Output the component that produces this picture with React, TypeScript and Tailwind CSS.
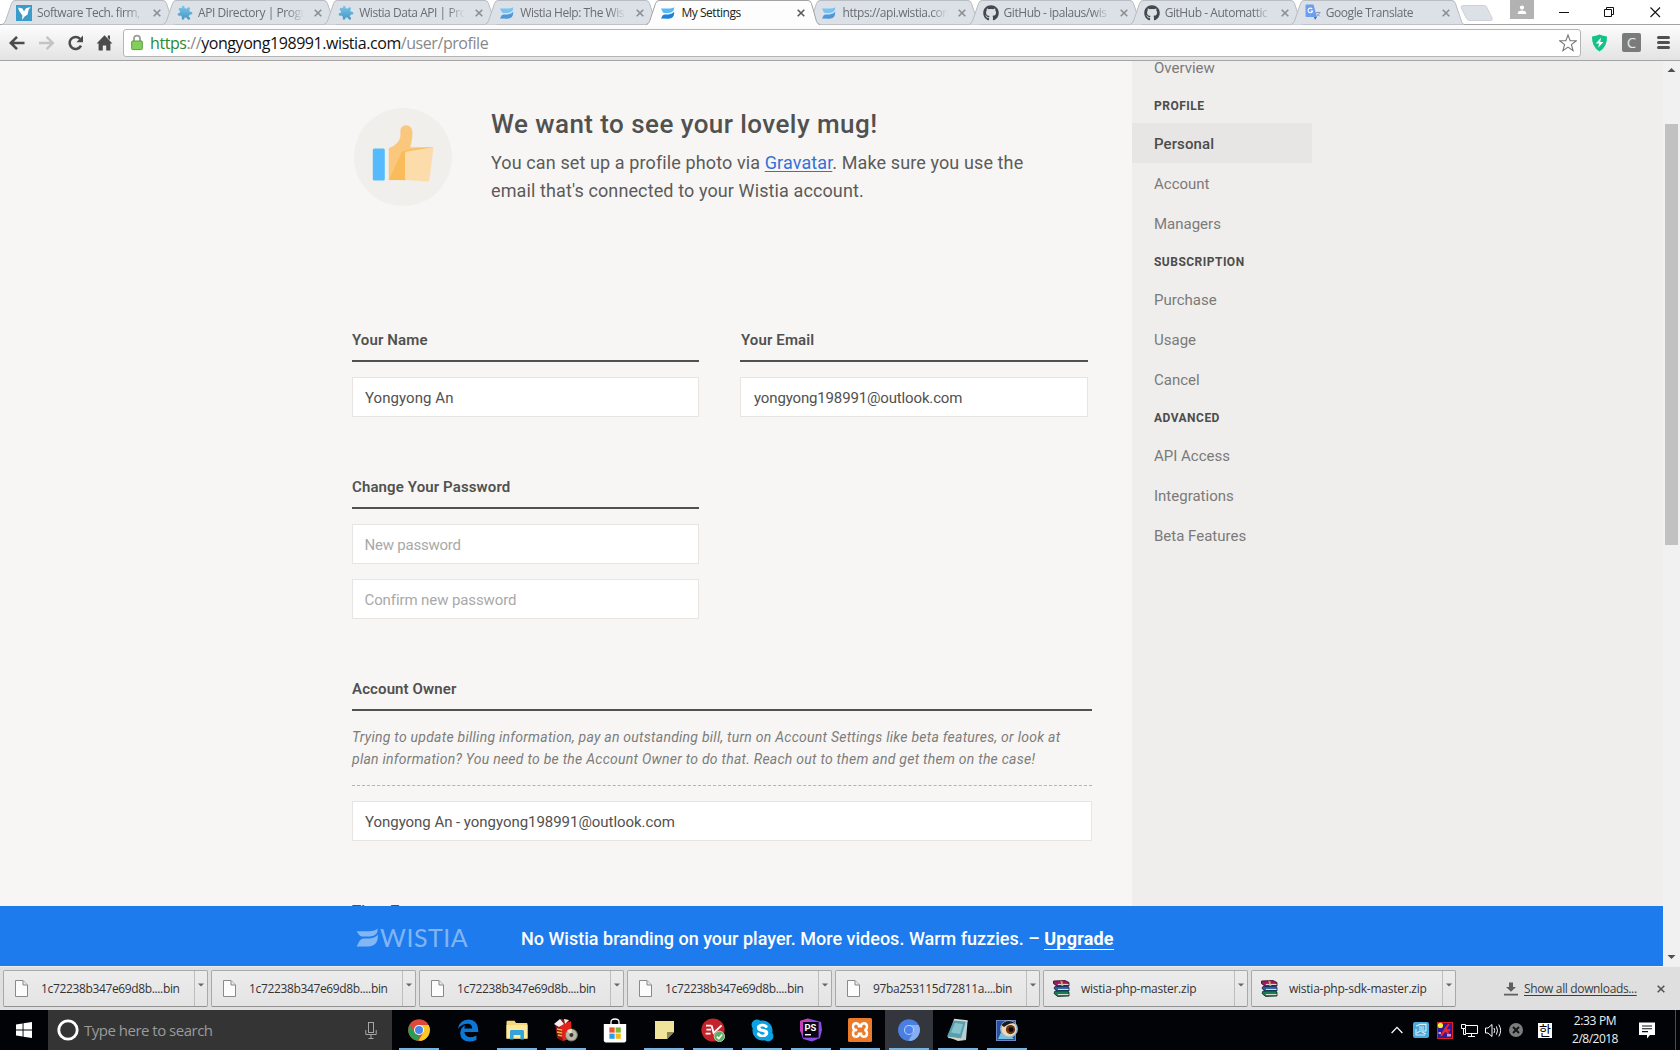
import React from "react";
import { FaGithub, FaSkype } from "react-icons/fa";

/* ---------- favicons ---------- */

const BirdIcon = () => (
  <svg width="16" height="16" viewBox="0 0 16 16">
    <rect width="16" height="16" fill="#3a9ccb" />
    <path d="M2 2.5 L6.5 3.6 L8 6.5 L10 3.2 L14.5 2 L12.6 5 L11.6 9.4 L8.6 11.4 L6 15 L6.4 10.6 L3.2 6 Z" fill="#fff" />
  </svg>
);

const PuzzleIcon = () => (
  <svg width="16" height="16" viewBox="0 0 16 16">
    <defs>
      <linearGradient id="pz" x1="0" y1="0" x2="0" y2="1">
        <stop offset="0" stopColor="#7cc6e6" />
        <stop offset="1" stopColor="#4596c8" />
      </linearGradient>
    </defs>
    <path
      d="M5 3 Q4.6 0.6 6.4 0.8 Q8 1 7.6 3.2 L10 3.6 Q10.8 1.6 12.6 2.4 Q13.8 3.4 12.2 5 L13 6.8 Q15.6 6.4 15.4 8.4 Q15 9.8 13 9.4 L11.6 11.2 Q14 13 12.6 14.4 Q11 15.4 9.8 12.8 L7.6 12.6 Q7.4 15 5.6 14.8 Q4.2 14.2 5 12 L3.4 10.4 Q1 11.4 0.6 9.6 Q0.6 8 2.8 7.8 L3 6 Q0.8 4.8 1.8 3.4 Q3 2.2 5 3 Z"
      fill="url(#pz)"
    />
  </svg>
);

const WistiaIcon = ({ faded = true }: { faded?: boolean }) => (
  <svg width="16" height="16" viewBox="0 0 16 16" opacity={faded ? 0.75 : 1}>
    <path d="M1 3.4 L10 3.4 Q13 3 14.2 2.2 Q14.4 7.6 8.4 7.9 L4 7.9 Q3 7.8 2.4 6.6 Z" fill="#59b8f7" />
    <path d="M1 13.6 L2.6 10.6 Q3.4 9.4 5 9.4 L8.4 9.4 Q12.6 9.2 14.2 6.8 Q14.6 13.6 8.4 13.8 Z" fill="#1e80d8" />
  </svg>
);

const TranslateIcon = () => (
  <svg width="17" height="17" viewBox="0 0 17 17">
    <path d="M7 5 H15 Q16 5 16 6 V15 Q16 16 15 16 H10 Z" fill="#dfe3ea" />
    <path d="M11 8.5 H15.6 M13.3 7.6 V8.5 M14.8 8.5 Q14 11 11.6 12.4 M12 9.6 L14.8 12.4" stroke="#8b97a8" strokeWidth="0.9" fill="none" />
    <path d="M1.5 0.5 H8.5 L12 13 H1.5 Q0.5 13 0.5 12 V1.5 Q0.5 0.5 1.5 0.5 Z" fill="#6b9df2" />
    <path d="M9 13 H12 L10 16 Z" fill="#3f68c4" />
    <path d="M7.2 5 A2.3 2.3 0 1 0 7.6 7 H5.6" stroke="#fff" strokeWidth="1.1" fill="none" />
  </svg>
);

const GithubIcon = () => <FaGithub size={16} color="#44474b" />;

const tabs = [
  { title: "Software Tech. firm,", Icon: BirdIcon },
  { title: "API Directory | Progr", Icon: PuzzleIcon },
  { title: "Wistia Data API | Pro", Icon: PuzzleIcon },
  { title: "Wistia Help: The Wis", Icon: WistiaIcon },
  { title: "My Settings", Icon: WistiaIcon, active: true },
  { title: "https://api.wistia.com", Icon: WistiaIcon },
  { title: "GitHub - ipalaus/wis", Icon: GithubIcon },
  { title: "GitHub - Automattic", Icon: GithubIcon },
  { title: "Google Translate", Icon: TranslateIcon },
];

const CloseX = ({ color, size = 8 }: { color: string; size?: number }) => (
  <svg width={size} height={size} viewBox="0 0 8 8" className="shrink-0">
    <path d="M0.7 0.7 L7.3 7.3 M7.3 0.7 L0.7 7.3" stroke={color} strokeWidth="1.6" />
  </svg>
);

function Tab({ title, Icon, active }: { title: string; Icon: React.FC<any>; active?: boolean }) {
  return (
    <div className={`relative w-[161.1px] h-[25px] shrink-0 ${active ? "z-10" : "z-0"}`}>
      <svg className="absolute left-0 top-0" width="174" height="26" viewBox="0 0 174 26">
        <path
          d={
            active
              ? "M0 25.5 Q2.5 24.5 3.5 21.5 L9.5 3.5 Q10.5 0.5 13 0.5 H162 Q164.5 0.5 165.5 3.5 L170.5 21.5 Q171.5 24.5 174 25.5 V26 H0 Z"
              : "M0 24.5 Q2.5 23.5 3.5 21 L9.5 3.5 Q10.5 0.5 13 0.5 H161 Q163.5 0.5 164.5 3.5 L170.5 21.5 Q171.3 24 173 24.5 Z"
          }
          fill={active ? "#fdfdfd" : "#dce1e7"}
        />
        <path
          d={
            active
              ? "M0 24.5 Q2.5 24 3.5 21.5 L9.5 3.5 Q10.5 0.5 13 0.5 H162 Q164.5 0.5 165.5 3.5 L170.5 21.5 Q171.5 24 174 24.5"
              : "M0 24.5 Q2.5 23.5 3.5 21 L9.5 3.5 Q10.5 0.5 13 0.5 H161 Q163.5 0.5 164.5 3.5 L170.5 21.5 Q171.3 24 173 24.5"
          }
          fill="none"
          stroke={active ? "#a3a3a3" : "#b9bcc0"}
        />
      </svg>
      <div className="relative flex h-[25px] items-center pl-[14px]">
        <div className="flex w-[18px] shrink-0 items-center">
          <Icon faded={!active} />
        </div>
        <div
          className={`ml-[3px] w-[106px] overflow-hidden whitespace-nowrap pt-px text-[12px] tracking-[-0.45px] ${
            active ? "text-[#222]" : "text-[#6a6d71] [mask-image:linear-gradient(to_right,#000_84%,transparent)]"
          }`}
        >
          {title}
        </div>
        <div className="ml-[10px] flex items-center">
          <CloseX color={active ? "#5a5a5a" : "#8b8e92"} />
        </div>
      </div>
    </div>
  );
}

function TabStrip() {
  return (
    <div className="relative flex h-[25px] border-b border-[#a3a3a3] bg-white pl-[2px]">
      {tabs.map((t) => (
        <Tab key={t.title} {...t} />
      ))}
      <svg className="ml-[8px] mt-[5px] shrink-0" width="34" height="16" viewBox="0 0 34 16">
        <path d="M3 0.5 H24 Q26 0.5 27 2.5 L32 13 Q33 15.5 30.5 15.5 H10 Q7.5 15.5 6.5 13.5 L1.2 2.8 Q0.5 0.5 3 0.5 Z" fill="#dce1e7" stroke="#cfd3d8" />
      </svg>
      <div className="ml-[16px] flex h-[19px] w-6 shrink-0 items-center justify-center bg-[#b2b2b2]">
        <svg width="10" height="10" viewBox="0 0 10 10" fill="#fff">
          <circle cx="5" cy="2.6" r="2.1" />
          <path d="M0.8 9 V8 Q1 5.6 5 5.4 Q9 5.6 9.2 8 V9 Z" />
        </svg>
      </div>
      <svg className="ml-[20px] mt-[6px] shrink-0" width="114" height="13" viewBox="0 0 114 13" fill="none" stroke="#111">
        <path d="M5 6.5 H15" />
        <path d="M50.5 3.5 H57.5 V10.5 H50.5 Z M52.5 3.5 V1.5 H59.5 V8.5 H57.5" />
        <path d="M96.5 1.5 L106 11 M106 1.5 L96.5 11" strokeWidth="1.1" />
      </svg>
    </div>
  );
}

/* ---------- toolbar ---------- */

function Toolbar() {
  return (
    <div className="flex h-9 items-center border-b border-[#a5a5a5] bg-linear-to-b from-[#fdfdfd] to-[#e3e3e3]">
      <svg className="shrink-0" width="123" height="34" viewBox="0 0 123 34" fill="none">
        <path d="M24.5 17 H11 M17 10.8 L10.8 17 L17 23.2" stroke="#4b4b4b" strokeWidth="2.6" />
        <path d="M39 17 H52.5 M46.6 10.8 L52.8 17 L46.6 23.2" stroke="#c4c4c4" strokeWidth="2.4" />
        <path d="M81 19.6 A6 6 0 1 1 80 12.8" stroke="#4b4b4b" strokeWidth="2.5" />
        <path d="M83 9.6 V16.2 H76.4 Z" fill="#4b4b4b" />
        <path d="M104.5 9.2 L112.4 17.4 H110.4 V24.6 H106.2 V19.4 H102.8 V24.6 H98.6 V17.4 H96.6 Z M107.8 9.6 H110 V14 L107.8 12 Z" fill="#4b4b4b" />
      </svg>
      <div className="flex h-[28px] flex-1 items-center rounded-[3px] border border-[#b5b5b5] bg-white">
        <svg className="ml-[7px] shrink-0" width="12" height="17" viewBox="0 0 12 17">
          <path d="M3 8 V4.6 Q3 1.6 6 1.6 Q9 1.6 9 4.6 V8" fill="none" stroke="#9c9c9c" strokeWidth="1.8" />
          <rect x="0.7" y="7" width="10.6" height="8.6" rx="0.8" fill="#82cf5c" stroke="#56a13b" />
        </svg>
        <div className="ml-[7px] flex-1 whitespace-nowrap text-[16px] leading-[24px] tracking-[-0.43px] text-[#888]">
          <span className="text-[#2a8a2c]">https</span>://<span className="text-[#111]">yongyong198991.wistia.com</span>/user/profile
        </div>
        <svg className="mr-[3px]" width="18" height="18" viewBox="0 0 18 18">
          <path d="M9 0.9 L11.1 6.6 L17.3 6.8 L12.4 10.6 L14.1 16.6 L9 13.1 L3.9 16.6 L5.6 10.6 L0.7 6.8 L6.9 6.6 Z" fill="#fff" stroke="#777" strokeWidth="1.1" />
        </svg>
      </div>
      <svg className="ml-[10px] shrink-0" width="17" height="18" viewBox="0 0 17 18">
        <path d="M8.5 0.5 Q12 2.2 16 2.6 Q16.4 13 8.5 17.5 Q0.6 13 1 2.6 Q5 2.2 8.5 0.5 Z" fill="#12c286" />
        <path d="M10 3.8 L4.8 9.4 H8 L7.2 13.8 L12.4 8 H9.2 Z" fill="#fff" />
      </svg>
      <div className="ml-[14px] flex h-[19px] w-[19px] shrink-0 items-center justify-center rounded-[2px] bg-[#7b7b7b] text-[15px] leading-none text-[#e8e8e8]">
        C
      </div>
      <div className="ml-[16px] mr-[10px] flex w-[13px] shrink-0 flex-col gap-[2px]">
        <i className="h-[3px] rounded-sm bg-[#505050]" />
        <i className="h-[3px] rounded-sm bg-[#505050]" />
        <i className="h-[3px] rounded-sm bg-[#505050]" />
      </div>
    </div>
  );
}

/* ---------- page ---------- */

const Label = ({ children, className = "" }: { children: React.ReactNode; className?: string }) => (
  <div className={`h-[32px] border-b-2 border-[#525150] text-[15px] font-semibold leading-[20px] tracking-[0.12px] text-[#515150] ${className}`}>{children}</div>
);

const Field = ({ children, className = "" }: { children: React.ReactNode; className?: string }) => (
  <div className={`mt-[15px] h-10 border border-[#e6e5e3] bg-white pt-px pr-3 text-[15px] leading-[38px] ${className}`}>{children}</div>
);

const nav = [
  { heading: null, items: ["Overview"] },
  { heading: "PROFILE", items: ["Personal", "Account", "Managers"] },
  { heading: "SUBSCRIPTION", items: ["Purchase", "Usage", "Cancel"] },
  { heading: "ADVANCED", items: ["API Access", "Integrations", "Beta Features"] },
];

function SideNav() {
  return (
    <nav className="w-[531px] shrink-0 overflow-hidden bg-[#efeeec]">
      <div className="-mt-[14px] w-[180px]">
        {nav.map((g) => (
          <div key={g.items[0]}>
            {g.heading && <div className="h-9 pl-[22px] pt-px text-[12px] font-bold leading-[36px] tracking-[0.48px] text-[#4c4c4b]">{g.heading}</div>}
            {g.items.map((it) => (
              <div
                key={it}
                className={`h-10 pl-[22px] pt-px text-[15px] leading-[40px] ${
                  it === "Personal" ? "bg-[#e7e6e4] font-medium tracking-[0.1px] text-[#4c4c4b]" : "text-[#7b7a79]"
                }`}
              >
                {it}
              </div>
            ))}
          </div>
        ))}
      </div>
    </nav>
  );
}

const Thumb = () => (
  <svg width="98" height="98" viewBox="0 0 98 98" className="shrink-0">
    <circle cx="49" cy="49" r="49" fill="#f0efec" />
    <rect x="18.8" y="40.4" width="12" height="32" rx="1.5" fill="#56bbfd" />
    <path d="M34.8 72 V40.2 Q45 36.4 46.4 28.4 V21.8 Q47.6 17.2 52.4 17.2 Q57.6 17.8 58.4 23.4 Q58.6 32.4 56 39.2 L78 39.2 Q79.4 39.4 79.2 40.8 L52 72.2 Z" fill="#fbc77c" />
    <path d="M34.8 72 L48 43.6 Q62 39.4 78.6 39.6 L58 72 Z" fill="#fabb5a" />
    <path d="M51 45.4 Q51 43.8 52.6 43.4 L77.4 39.6 Q79.6 39.6 79.2 41.8 L75.4 72 Q75 73.6 73.2 73.6 L52.4 72 Q51 71.8 51 70.4 Z" fill="#fddcab" />
  </svg>
);

function Page() {
  return (
    <div className="flex h-[905px] bg-[#f7f6f4]">
      <div className="flex w-[1663px] flex-col">
        <div className="flex h-[845px]">
          <main className="w-[1132px] shrink-0 overflow-hidden pl-[352px] pt-[47px]">
            <div className="flex h-[222px]">
              <div className="ml-[1.5px]"><Thumb /></div>
              <div className="ml-[39.5px]">
                <h1 className="whitespace-nowrap text-[26px] font-medium leading-[32px] tracking-[0.44px] text-[#515150]">We want to see your lovely mug!</h1>
                <p className="mt-[9px] whitespace-nowrap text-[18px] leading-[28px] tracking-[0.11px] text-[#5c5b5a]">
                  You can set up a profile photo via <span className="text-[#3670d6] underline underline-offset-2">Gravatar</span>. Make sure you use the
                  <br />
                  email that's connected to your Wistia account.
                </p>
              </div>
            </div>
            <div className="flex gap-[41px]">
              <div className="w-[347px]">
                <Label>Your Name</Label>
                <Field className="pl-3 tracking-[0.06px] text-[#515150]">Yongyong An</Field>
              </div>
              <div className="w-[348px]">
                <Label className="pl-px">Your Email</Label>
                <Field className="pl-[13px] tracking-[-0.15px] text-[#515150]">yongyong198991@outlook.com</Field>
              </div>
            </div>
            <div className="mt-[60px] w-[347px]">
              <Label>Change Your Password</Label>
              <Field className="pl-[11.5px] tracking-[-0.22px] text-[#a9a9a8]">New password</Field>
              <Field className="pl-[11.5px] tracking-[-0.1px] text-[#a9a9a8]">Confirm new password</Field>
            </div>
            <div className="mt-[60px] w-[740px]">
              <Label>Account Owner</Label>
              <p className="mt-[15px] h-[60px] whitespace-nowrap border-b border-dashed border-[#b5b4b2] text-[14px] italic leading-[22px] tracking-[0.25px] text-[#7d7c7b]">
                Trying to update billing information, pay an outstanding bill, turn on Account Settings like beta features, or look at
                <br />
                plan information? You need to be the Account Owner to do that. Reach out to them and get them on the case!
              </p>
              <Field className="pl-3 tracking-[-0.04px] text-[#515150]">Yongyong An - yongyong198991@outlook.com</Field>
            </div>
            <div className="mt-[60px] w-[740px]">
              <Label>Time Zone</Label>
            </div>
          </main>
          <SideNav />
        </div>
        <div className="flex h-[60px] bg-[#1e7bed] pl-[356px]">
          <div className="flex w-[165px] pt-[22px] text-white/45">
            <svg width="24" height="19" viewBox="0 0 24 19" fill="currentColor" className="shrink-0">
              <path d="M0.6 3.2 H13 Q19 3 21.6 0.4 Q22.2 8 14 8.4 H6 Q4 8.4 3 6.8 Z" />
              <path d="M0.6 18.4 L3 14 Q4.4 10.6 8 10.4 H13.6 Q19.6 10.2 21.8 6.6 Q22.6 17.8 13 18.4 Z" />
            </svg>
            <span className="font-[Lato] text-[25px] leading-[19px] tracking-[0.5px]">WISTIA</span>
          </div>
          <p className="whitespace-nowrap pt-[19px] text-[18px] font-medium leading-[28px] tracking-[0.01px] text-white">
            No Wistia branding on your player. More videos. Warm fuzzies. – <span className="inline-block h-[25px] border-b border-white font-bold tracking-[0.2px]">Upgrade</span>
          </p>
        </div>
      </div>
      <div className="flex w-[17px] flex-col items-center bg-[#f1f1f1]">
        <svg width="17" height="17" viewBox="0 0 17 17"><path d="M4.5 11 L8.5 7 L12.5 11 Z" fill="#505050" /></svg>
        <div className="mt-[46px] h-[421px] w-[13px] bg-[#c1c1c1]" />
        <div className="flex-1" />
        <svg width="17" height="17" viewBox="0 0 17 17"><path d="M4.5 6 L8.5 10 L12.5 6 Z" fill="#505050" /></svg>
      </div>
    </div>
  );
}

/* ---------- downloads shelf ---------- */

const FileIcon = () => (
  <svg width="13" height="17" viewBox="0 0 13 17" className="mx-[2px]">
    <path d="M0.5 0.5 H8 L12.5 5 V16.5 H0.5 Z" fill="#fcfcfc" stroke="#8a8a8a" />
    <path d="M8 0.5 V5 H12.5" fill="#e6e6e6" stroke="#8a8a8a" />
  </svg>
);

const RarIcon = () => (
  <svg width="17" height="17" viewBox="0 0 17 17">
    <path d="M0.5 1 L12 0.5 L16 2.5 V6 L4.5 6.4 L0.5 3.6 Z" fill="#a3195b" stroke="#2b0a18" strokeWidth="0.8" />
    <path d="M2 6.4 L14 6 L16 7.4 V11 L4.5 11.2 L1 8.4 Z" fill="#245fa8" stroke="#0c1d38" strokeWidth="0.8" />
    <path d="M2 11 L14 10.8 L16 12.2 V16 L4.5 16.4 L1 13.4 Z" fill="#1c7a52" stroke="#07261a" strokeWidth="0.8" />
    <path d="M4.8 4.4 H15.6 M4.8 9.4 H15.6 M4.8 14.6 H15.6" stroke="#e8e8e8" strokeWidth="1" />
    <path d="M9 1 V6 M7.6 0.8 L10 6" stroke="#d8c45c" strokeWidth="0.9" />
  </svg>
);

const downloads = [
  "1c72238b347e69d8b....bin",
  "1c72238b347e69d8b....bin",
  "1c72238b347e69d8b....bin",
  "1c72238b347e69d8b....bin",
  "97ba253115d72811a....bin",
  "wistia-php-master.zip",
  "wistia-php-sdk-master.zip",
];

function Downloads() {
  return (
    <div className="flex h-[44px] border-t border-[#efefef] bg-[#dfdfdf] pl-[3px] pt-[3px]">
      <div className="flex gap-[3px]">
        {downloads.map((d, i) => {
          const zip = d.endsWith("zip");
          return (
            <div key={i} className="flex h-[37px] w-[205px] rounded-[2px] border border-[#a9a9a9] border-b-[#909090] bg-linear-to-b from-[#ececec] to-[#e4e4e4]">
              <div className="flex w-[191px] items-center border-r border-[#bdbdbd] pl-[9px]">
                <div className="w-[17px]">{zip ? <RarIcon /> : <FileIcon />}</div>
                <span className={`ml-[11px] mt-px whitespace-nowrap text-[12px] text-[#333] ${zip ? "tracking-[-0.24px]" : "tracking-[-0.36px]"}`}>{d}</span>
              </div>
              <div className="flex flex-1 justify-center pt-[12px]">
                <svg width="6" height="4" viewBox="0 0 6 4"><path d="M0 0.4 H6 L3 3.6 Z" fill="#666" /></svg>
              </div>
            </div>
          );
        })}
      </div>
      <div className="ml-[48px] flex h-[37px] items-center">
        <svg width="14" height="14" viewBox="0 0 14 14" fill="#5f5f5f">
          <path d="M5 0.5 H9 V5 H12 L7 9.8 L2 5 H5 Z M0 11.8 H14 V13.4 H0 Z" />
        </svg>
        <span className="ml-[6px] mt-px whitespace-nowrap text-[12px] tracking-[-0.35px] text-[#3d3d3d] underline underline-offset-2">Show all downloads...</span>
        <span className="ml-[20px]"><CloseX color="#555" /></span>
      </div>
    </div>
  );
}

/* ---------- taskbar ---------- */

const ChromeIcon = ({ blue }: { blue?: boolean }) => {
  const c = blue ? ["#4a7fe0", "#4a7fe0", "#86aef5", "#4c83ee"] : ["#e0483c", "#2a9d52", "#fbc926", "#4a86ee"];
  return (
    <svg width="22" height="22" viewBox="0 0 22 22">
      <circle cx="11" cy="11" r="10.8" fill={c[0]} />
      <path d="M1.7 5.6 L6.4 13.6 L11 16 L10.4 21.8 A10.8 10.8 0 0 1 1.7 5.6 Z" fill={c[1]} />
      <path d="M11 6 H20.6 A10.8 10.8 0 0 1 10.4 21.8 L15.4 13.4 Z" fill={c[2]} />
      <circle cx="11" cy="11" r="5" fill={blue ? "#b9d0fb" : "#fff"} />
      <circle cx="11" cy="11" r="4" fill={c[3]} />
    </svg>
  );
};

const EdgeIcon = () => (
  <svg width="22" height="23" viewBox="0 0 22 23">
    <path
      d="M0.8 9.8 Q2.6 0.6 11.6 0.4 Q20.6 0.8 21.2 10.4 V13 H7.4 Q8 18 13.4 18.2 Q17 18 19.4 16.4 V21 Q16.4 22.6 12.4 22.6 Q3.4 22.2 3.2 14 Q3.4 8.6 8.6 6 Q7.4 7.4 7.4 9.4 H15.2 Q15 5 11 4.8 Q5.4 4.6 0.8 9.8 Z"
      fill="#0b78d7"
    />
  </svg>
);

const ExplorerIcon = () => (
  <svg width="22" height="20" viewBox="0 0 22 20">
    <path d="M0.5 2 Q0.5 0.8 1.6 0.8 H8.6 L10 3 H20.4 Q21.5 3 21.5 4 V18.6 H0.5 Z" fill="#f8d775" />
    <rect x="0.5" y="5" width="21" height="13.6" fill="#fde9a0" />
    <path d="M4 19.6 V11.4 Q4 10 5.4 10 H16.6 Q18 10 18 11.4 V19.6 H14.4 V15 H7.6 V19.6 Z" fill="#35a3d8" />
  </svg>
);

const RedBoxIcon = () => (
  <svg width="24" height="24" viewBox="0 0 24 24">
    <path d="M1 5 L7 1 L15 2 L17 20 L8 23 L3 20 Z" fill="#8e1512" />
    <path d="M6 8 L17 3 L18 20 L9 23 Z" fill="#e5211b" />
    <path d="M0 6 L6 1 L10 6 L5 9 Z M10 1 L15 2 L11 6 Z" fill="#f4eeee" />
    <path d="M3 11 L8 12 M3 14 L8 15 M4 17 L8 18" stroke="#e7b73c" strokeWidth="1.4" />
    <circle cx="17.4" cy="17" r="6" fill="#b9b9a8" stroke="#73736b" />
    <path d="M17 17 L13 12.5 A6 6 0 0 1 18 11 Z" fill="#e9e6c6" />
    <circle cx="17.4" cy="17" r="2" fill="#3c332b" />
  </svg>
);

const StoreIcon = () => (
  <svg width="24" height="25" viewBox="0 0 24 25">
    <path d="M8 8 V4 Q8 1 12 1 Q16 1 16 4 V8" fill="none" stroke="#fff" strokeWidth="1.3" />
    <path d="M0.8 6 H23.2 V22.6 Q23.2 24.4 21.4 24.4 H2.6 Q0.8 24.4 0.8 22.6 Z" fill="#fff" />
    <rect x="6.4" y="9.4" width="5.2" height="5.2" fill="#e8542c" />
    <rect x="12.6" y="9.4" width="5.2" height="5.2" fill="#7fb92f" />
    <rect x="6.4" y="15.6" width="5.2" height="5.2" fill="#2b9fe6" />
    <rect x="12.6" y="15.6" width="5.2" height="5.2" fill="#f6b71c" />
  </svg>
);

const NoteIcon = () => (
  <svg width="19" height="18" viewBox="0 0 19 18">
    <path d="M0 0 H19 V11 L12 18 H0 Z" fill="#efe49a" />
    <path d="M12 18 V11 H19 Z" fill="#8c8452" />
  </svg>
);

const ExpressVpnIcon = () => (
  <svg width="24" height="24" viewBox="0 0 24 24">
    <circle cx="12" cy="12" r="11.6" fill="#c3242b" />
    <path d="M5 7.6 H10.4 M5.4 11.6 H10 M4.6 15.6 H9.6 M10.6 7.4 L12.6 15 L20.6 7.4" stroke="#fff" strokeWidth="1.9" fill="none" />
    <circle cx="18.4" cy="18.4" r="5.2" fill="#5fae63" stroke="#cfe6d0" strokeWidth="0.8" />
    <path d="M15.8 18.6 L17.8 20.6 L21.2 16.6" stroke="#fff" strokeWidth="1.5" fill="none" />
  </svg>
);

const SkypeIcon = () => (
  <div className="relative flex items-center justify-center">
    <i className="absolute h-4 w-4 rounded-full bg-white" />
    <FaSkype className="relative" size={25} color="#0aa2e3" />
  </div>
);

const PhpStormIcon = () => (
  <svg width="24" height="24" viewBox="0 0 24 24">
    <path d="M1 3 L9 0.6 L15 2 L22 4 L23 12 L21 20 L13 23.6 L4 21 L1 12 Z" fill="#8a4be8" />
    <path d="M1 3 L9 0.6 L13 8 L6 17 L1 13 Z" fill="#c93fb8" />
    <rect x="4" y="4" width="15.6" height="15.6" fill="#0b0610" />
    <text x="5.4" y="12.8" fontSize="9.4" fontWeight="700" fontFamily="Roboto" fill="#fff">PS</text>
    <rect x="6" y="16" width="6" height="1.4" fill="#fff" />
  </svg>
);

const XamppIcon = () => (
  <svg width="24" height="24" viewBox="0 0 24 24">
    <rect width="24" height="24" rx="1.5" fill="#ec7a2b" />
    <path
      d="M9.2 12 H7.6 Q5 11.6 5 8.4 Q5.2 5.2 8.2 5.2 Q11 5.4 11 8.4 H13 Q13 5.4 15.8 5.2 Q18.8 5.2 19 8.4 Q19 11.6 16.4 12 Q19 12.4 19 15.6 Q18.8 18.8 15.8 18.8 Q13 18.6 13 15.6 H11 Q11 18.6 8.2 18.8 Q5.2 18.8 5 15.6 Q5 12.4 7.6 12"
      stroke="#fff"
      strokeWidth="2.4"
      fill="none"
    />
  </svg>
);

const NotepadIcon = () => (
  <svg width="24" height="24" viewBox="0 0 24 24">
    <path d="M8 1.6 L21.6 3 L20 22 L2 20 Z" fill="#b9cfd2" />
    <path d="M8 1.6 L20 2.8 L15 20.6 L1 18.4 Z" fill="#58a0ae" />
    <path d="M9 5 L17 6 L14 16 L5 14.6 Z" fill="#86c3cc" />
    <path d="M1 18.4 L15 20.6 L20 22 L12 23 Z" fill="#d6d2c4" />
    <path d="M8 1.6 L21.6 3" stroke="#d9d9d9" strokeWidth="1.6" />
  </svg>
);

const MediaIcon = () => (
  <svg width="24" height="24" viewBox="0 0 24 24">
    <rect x="1.5" y="2.5" width="19" height="20" fill="#274f9c" stroke="#6d86c6" />
    <path d="M3 21 L8 10 L14 16 L19 21 Z" fill="#6fc3e0" />
    <circle cx="14" cy="11" r="8.2" fill="#f1d8b4" stroke="#8fb8d8" strokeWidth="1.4" />
    <path d="M6.5 7 Q12 0 20.6 5.6 Q15 4 9 9 Z" fill="#1c1a20" />
    <circle cx="15.5" cy="11.6" r="4.6" fill="#6a3513" />
    <circle cx="16" cy="11.6" r="2.4" fill="#0a0808" />
  </svg>
);

const Chromium = () => <ChromeIcon blue />;

const apps = [
  { Icon: ChromeIcon, open: true },
  { Icon: EdgeIcon },
  { Icon: ExplorerIcon, open: true },
  { Icon: RedBoxIcon, open: true },
  { Icon: StoreIcon },
  { Icon: NoteIcon, open: true },
  { Icon: ExpressVpnIcon, open: true },
  { Icon: SkypeIcon, open: true },
  { Icon: PhpStormIcon, open: true },
  { Icon: XamppIcon, open: true },
  { Icon: Chromium, open: true, active: true },
  { Icon: NotepadIcon, open: true },
  { Icon: MediaIcon, open: true },
];

function Taskbar() {
  return (
    <div className="flex h-10 bg-[#010307]">
      <div className="flex w-12 items-center justify-center">
        <svg width="16" height="16" viewBox="0 0 16 16" fill="#fff">
          <path d="M0 2.4 L6.6 1.4 V7.6 H0 Z M7.5 1.3 L16 0 V7.6 H7.5 Z M0 8.4 H6.6 V14.6 L0 13.6 Z M7.5 8.4 H16 V16 L7.5 14.7 Z" />
        </svg>
      </div>
      <div className="flex w-[344px] items-center bg-[#343434] pl-[9px]">
        <svg width="22" height="24" viewBox="0 0 22 24">
          <circle cx="11" cy="12" r="9.2" fill="none" stroke="#fff" strokeWidth="2.8" />
        </svg>
        <span className="ml-[5px] whitespace-nowrap text-[15px] tracking-[-0.5px] text-[#9b9b9b]">Type here to search</span>
        <svg className="ml-auto mr-[15px]" width="12" height="17" viewBox="0 0 12 17" fill="none" stroke="#a5a5a5">
          <rect x="3.5" y="0.5" width="5" height="10" />
          <path d="M0.8 8 V12.5 H11.2 V8 M6 12.5 V16.5 M3.5 16.5 H8.5" />
        </svg>
      </div>
      <div className="flex pl-[3px]">
        {apps.map(({ Icon, open, active }, i) => (
          <div key={i} className={`flex h-10 w-[48px] flex-col items-center mr-px ${active ? "bg-[#33373d]" : ""}`}>
            <div className="flex h-[38px] items-center pt-[2px]"><Icon /></div>
            {open && <div className="h-[2px] w-10 bg-[#76b4e4]" />}
          </div>
        ))}
      </div>
      <div className="ml-auto flex items-center">
        <svg width="12" height="8" viewBox="0 0 12 8" fill="none" stroke="#fff" strokeWidth="1.3"><path d="M0.6 7 L6 1.4 L11.4 7" /></svg>
        <svg className="ml-[10px]" width="16" height="16" viewBox="0 0 16 16">
          <rect width="16" height="16" rx="2" fill="#4aa9d8" />
          <path d="M3 4 L7 2.4 H13 V9 H7 L4 11 M6 5 H11 M6 7 H11 M3 7 V13 H12 M9 10 L13 12" stroke="#d6f0fb" fill="none" strokeWidth="1.1" />
        </svg>
        <svg className="ml-[8px]" width="16" height="17" viewBox="0 0 16 17">
          <rect x="0.5" y="0.5" width="15" height="16" fill="#2b1e9e" stroke="#e01e28" />
          <circle cx="3.4" cy="3.4" r="2.6" fill="#f7ec36" />
          <path d="M12 2 L9 6 L4 14 M9 6 L12 14 M6 10 L13 8" stroke="#f0262c" strokeWidth="2" fill="none" />
          <path d="M1.5 10 H4 V12 H1.5 Z M10 12 H14 V14.6 H10 Z" fill="#d79acb" />
        </svg>
        <svg className="ml-[8px]" width="17" height="15" viewBox="0 0 17 15" fill="none" stroke="#fff">
          <path d="M5 2.5 H16.5 V10.5 H4.5 V6 M10.5 10.5 V13.5 M7 13.5 H14" />
          <path d="M0.5 1.5 H4.5 V5.5 H0.5 Z M2.5 5.5 V11.5 H5" />
        </svg>
        <svg className="ml-[7px]" width="17" height="15" viewBox="0 0 17 15" fill="none" stroke="#fff">
          <path d="M0.5 5 H3 L7 1.5 V13.5 L3 10 H0.5 Z M9 5 Q10.4 7.5 9 10 M11.4 3.4 Q13.6 7.5 11.4 11.6 M13.8 1.6 Q17.4 7.5 13.8 13.4" />
        </svg>
        <svg className="ml-[7px]" width="14" height="14" viewBox="0 0 14 14">
          <circle cx="7" cy="7" r="7" fill="#7d7d7d" />
          <path d="M4 4 L10 10 M10 4 L4 10" stroke="#111" strokeWidth="1.8" />
        </svg>
        <div className="ml-[15px] flex h-[15px] w-[14px] items-center justify-center bg-white pb-px font-['Noto_Sans_CJK_KR',sans-serif] text-[13px] leading-[14px] text-black">
          한
        </div>
        <div className="ml-[20px] w-[46px] whitespace-nowrap text-center text-[12px] leading-[18px] text-[#f0f0f0]">
          <div className="tracking-[-0.35px]">2:33 PM</div>
          <div className="tracking-[-0.5px]">2/8/2018</div>
        </div>
        <svg className="ml-[21px]" width="16" height="17" viewBox="0 0 16 17">
          <path d="M0 0.5 H16 V13 H11 L8 16.4 V13 H0 Z" fill="#fff" />
          <path d="M3 4 H13 M3 6.8 H13 M3 9.6 H9" stroke="#111" strokeWidth="1.1" />
        </svg>
        <div className="ml-[20px] h-10 w-[5px] border-l border-[#4c4d50]" />
      </div>
    </div>
  );
}

export default function App() {
  return (
    <div className="h-[1050px] w-[1680px] overflow-hidden font-['Open_Sans',sans-serif]">
      <TabStrip />
      <Toolbar />
      <div className="font-[Roboto,sans-serif]">
        <Page />
      </div>
      <Downloads />
      <Taskbar />
    </div>
  );
}
